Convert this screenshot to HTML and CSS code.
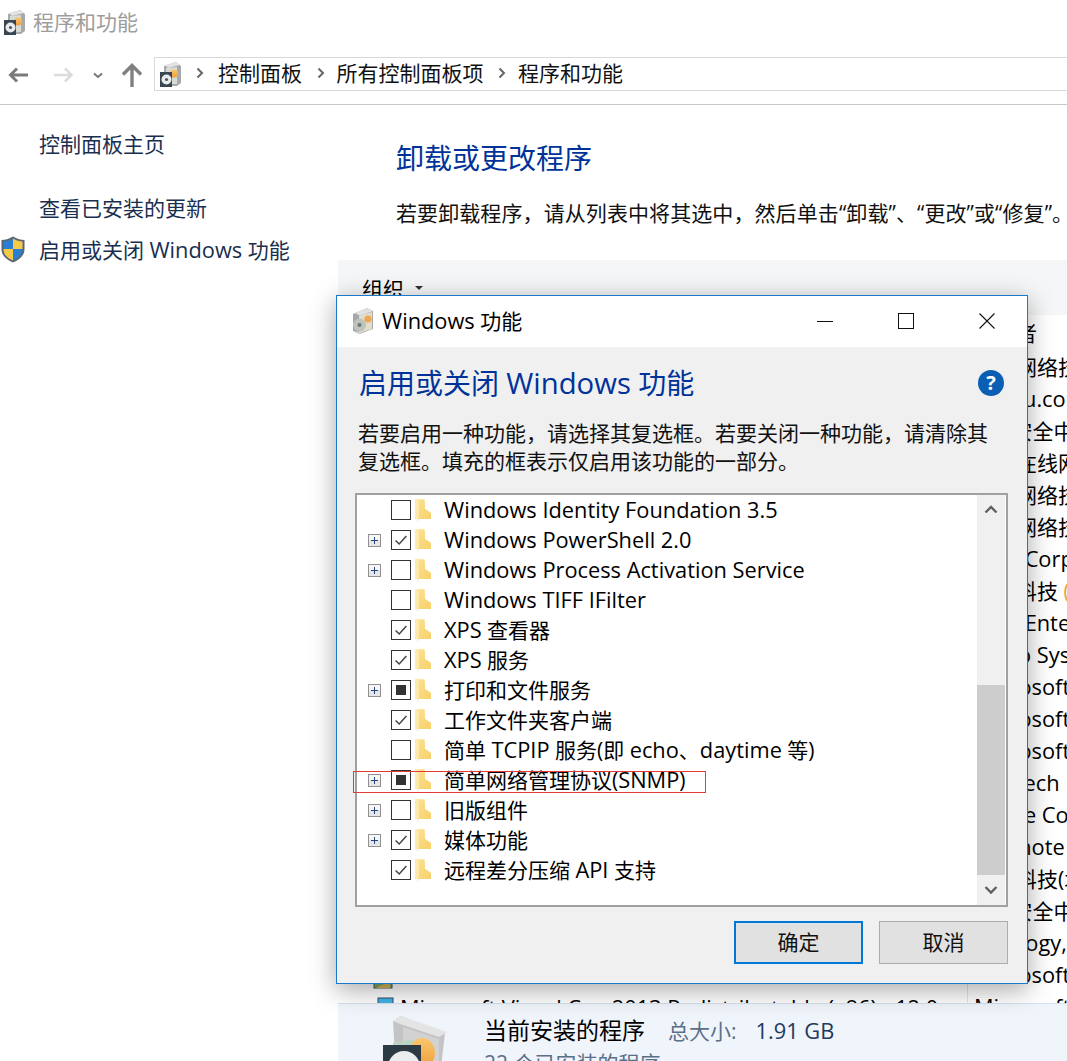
FILE: index.html
```html
<!DOCTYPE html>
<html lang="zh-CN">
<head>
<meta charset="utf-8">
<title>程序和功能</title>
<link rel="stylesheet" href="styles.css">
</head>
<body>
<svg class="defs" width="0" height="0" aria-hidden="true">
  <defs>
    <linearGradient id="fold" x1="0" y1="0" x2="1" y2="0"><stop offset="0" stop-color="#fdebb0"/><stop offset="1" stop-color="#fbe092"/></linearGradient>
    <linearGradient id="fold2" x1="0" y1="0" x2="1" y2="1"><stop offset="0" stop-color="#fbdf8e"/><stop offset="1" stop-color="#f7d169"/></linearGradient>
    <linearGradient id="orange" x1="0" y1="0" x2="0" y2="1"><stop offset="0" stop-color="#f9c66d"/><stop offset="1" stop-color="#ee9f3c"/></linearGradient>
    <symbol id="folder" viewBox="0 0 16 23">
      <path d="M0 0H9.5L10 10L16 14V20H4L2 23V20H0Z" fill="url(#fold)"/>
      <path d="M4 1H9.5L10 10L16 14V20H4Z" fill="url(#fold2)"/>
    </symbol>
    <symbol id="cpl" viewBox="0 0 21 25">
      <path d="M4 4L16 0L21 4V21L17 24H4Z" fill="#a9a9a9"/>
      <path d="M5 3L16 0L20 3L8 6Z" fill="#e2e2e2"/>
      <path d="M6 6L17 5V22H6Z" fill="#d6dbd4"/>
      <circle cx="14" cy="11.5" r="4" fill="url(#orange)"/>
      <path d="M0 10H12V25H0Z" fill="#39464f"/>
      <circle cx="6.5" cy="17.5" r="5" fill="#e8ecec"/>
      <circle cx="6.5" cy="17.5" r="1.6" fill="#556"/>
    </symbol>
    <symbol id="dlgbox" viewBox="0 0 26 28">
      <path d="M3 7L17 1L23 4V22L9 27L3 24Z" fill="#a4a8ac"/>
      <path d="M5 6L17 1L23 4L10 9Z" fill="#dfe1e3"/>
      <path d="M9 9L22 5V22L9 26Z" fill="#e3dcc8"/>
      <circle cx="18" cy="12" r="3.6" fill="#eea850"/>
      <circle cx="9.5" cy="18" r="6.5" fill="#bcc4bc"/>
      <circle cx="9.5" cy="18" r="2" fill="#6e7b70"/>
      <path d="M3 24L9 27L14 26L9 25Z" fill="#d6d6d6"/>
    </symbol>
    <symbol id="exp" viewBox="0 0 13 13">
      <rect x="0.5" y="0.5" width="12" height="12" fill="#e6e6e6" stroke="#919191"/>
      <rect x="1" y="1" width="11" height="5" fill="#f6f6f6"/>
      <path d="M6.5 3V10M3 6.5H10" stroke="#25437f" stroke-width="1" fill="none"/>
    </symbol>
    <symbol id="chk" viewBox="0 0 20 20">
      <path d="M4 10.5L8 14.5L16 5.5" stroke="#444" stroke-width="1.6" fill="none"/>
    </symbol>
  </defs>
</svg>

<div class="window">
  <header class="titlebar">
    <svg class="title-icon"><use href="#cpl"/></svg>
    <span class="title-text">程序和功能</span>
  </header>

  <nav class="navbar">
    <svg class="nav-back" viewBox="0 0 20 16"><path d="M9 1.5L2.5 8L9 14.5M3 8H20" fill="none" stroke="#7a7a7a" stroke-width="3"/></svg>
    <svg class="nav-fwd" viewBox="0 0 20 16"><path d="M11 1.5L17.5 8L11 14.5M17 8H0" fill="none" stroke="#dcdcdc" stroke-width="2.5"/></svg>
    <svg class="nav-drop" viewBox="0 0 10 7"><path d="M1 1.5L5 5L9 1.5" fill="none" stroke="#777" stroke-width="2"/></svg>
    <svg class="nav-up" viewBox="0 0 22 24"><path d="M2 11.5L11 2.5L20 11.5M11 3V24" fill="none" stroke="#808080" stroke-width="3.4"/></svg>
    <div class="crumbs">
      <svg class="crumb-icon"><use href="#cpl"/></svg>
      <svg class="crumb-sep first" viewBox="0 0 8 12"><path d="M1.5 1.5L6 6L1.5 10.5" fill="none" stroke="#666" stroke-width="2"/></svg>
      <span class="crumb">控制面板</span>
      <svg class="crumb-sep" viewBox="0 0 8 12"><path d="M1.5 1.5L6 6L1.5 10.5" fill="none" stroke="#666" stroke-width="2"/></svg>
      <span class="crumb">所有控制面板项</span>
      <svg class="crumb-sep" viewBox="0 0 8 12"><path d="M1.5 1.5L6 6L1.5 10.5" fill="none" stroke="#666" stroke-width="2"/></svg>
      <span class="crumb">程序和功能</span>
    </div>
  </nav>

  <div class="content">
    <aside class="sidebar">
      <a class="side-link home">控制面板主页</a>
      <a class="side-link updates">查看已安装的更新</a>
      <a class="side-link features">
        <svg class="shield" viewBox="0 0 24 27">
          <path d="M12 0.5C8 3 4 4 0.5 4V13C0.5 20 6 24 12 26.5C18 24 23.5 20 23.5 13V4C20 4 16 3 12 0.5Z" fill="#5a6672"/>
          <path d="M12 2.5C9 4.5 5.5 5.5 2.5 5.5V13H12Z" fill="#2b7fd3"/>
          <path d="M12 2.5C15 4.5 18.5 5.5 21.5 5.5V13H12Z" fill="#f7c948"/>
          <path d="M2.5 13H12V24.5C7 22.5 2.5 19 2.5 13Z" fill="#f7c948"/>
          <path d="M21.5 13H12V24.5C17 22.5 21.5 19 21.5 13Z" fill="#2b7fd3"/>
        </svg>
        启用或关闭 <span class="lat">Windows</span> 功能
      </a>
    </aside>

    <main class="main">
      <h1 class="main-title">卸载或更改程序</h1>
      <p class="main-desc">若要卸载程序，请从列表中将其选中，然后单击“卸载”、“更改”或“修复”。</p>
      <div class="toolbar"><span class="org">组织</span><span class="org-arrow"></span></div>
      <div class="col-head"><span class="col-name">名称</span><span class="col-pub">发布者</span></div>
      <div class="list">
        <div class="row"><span class="name"></span><span class="pub">北京网络技术</span></div>
        <div class="row"><span class="name"></span><span class="pub lat nudge">Baidu.com</span></div>
        <div class="row"><span class="name"></span><span class="pub"><span class="lat">360</span>安全中心</span></div>
        <div class="row"><span class="name"></span><span class="pub">上海在线网络</span></div>
        <div class="row"><span class="name"></span><span class="pub">北京网络技术</span></div>
        <div class="row"><span class="name"></span><span class="pub">上海网络技术</span></div>
        <div class="row"><span class="name"></span><span class="pub lat">Intel Corporation</span></div>
        <div class="row"><span class="name"></span><span class="pub">北京科技 <span class="mark">(</span></span></div>
        <div class="row"><span class="name"></span><span class="pub lat">Intel Enterprise</span></div>
        <div class="row"><span class="name"></span><span class="pub lat nudge">Cisco Systems</span></div>
        <div class="row"><span class="name"></span><span class="pub lat">Microsoft</span></div>
        <div class="row"><span class="name"></span><span class="pub lat">Microsoft</span></div>
        <div class="row"><span class="name"></span><span class="pub lat">Microsoft</span></div>
        <div class="row"><span class="name"></span><span class="pub lat">Logitech</span></div>
        <div class="row"><span class="name"></span><span class="pub lat nudge">Apple Computer</span></div>
        <div class="row"><span class="name"></span><span class="pub lat">Evernote</span></div>
        <div class="row"><span class="name"></span><span class="pub">深圳科技(北京)</span></div>
        <div class="row"><span class="name"></span><span class="pub"><span class="lat">360</span>安全中心</span></div>
        <div class="row"><span class="name"></span><span class="pub lat nudge">Neology,</span></div>
        <div class="row"><span class="name"><svg class="row-icon tall" viewBox="0 0 20 24"><rect x="1" y="1" width="18" height="22" fill="#7fa86a" stroke="#4a5a50"/><path d="M3 23L17 16V23Z" fill="#d8b45a"/></svg></span><span class="pub lat">Microsoft</span></div>
        <div class="row"><span class="name"><svg class="row-icon" viewBox="0 0 20 20"><rect x="3" y="1" width="15" height="15" fill="#3fb4e6" stroke="#3a4a66"/><path d="M0 10H8V16H0Z" fill="#9aa0a6"/></svg><span class="name-text lat">Microsoft Visual C++ 2013 Redistributable (x86) - 12.0</span></span><span class="pub lat">Microsoft</span></div>
      </div>
      <footer class="summary">
        <svg class="summary-icon" viewBox="0 0 64 76">
          <path d="M10 6L18 1L62 18L56 70L14 76Z" fill="#c4c4c4"/>
          <path d="M10 6L18 1L64 17L56 22L20 10Z" fill="#e4e4e4"/>
          <path d="M20 12L56 24V60H20Z" fill="#d2d2d2"/>
          <path d="M10 28L30 24L36 44H10Z" fill="#bcd4c4"/>
          <ellipse cx="39" cy="38" rx="13" ry="15" fill="url(#orange)"/>
          <path d="M0 30H38V76H0Z" fill="#2c3a44"/>
          <circle cx="21" cy="52" r="16" fill="#e9eeee"/>
        </svg>
        <div class="summary-text">
          <div class="summary-line">
            <span class="summary-title">当前安装的程序</span>
            <span class="summary-label">总大小:</span>
            <span class="summary-value lat">1.91 GB</span>
          </div>
          <div class="summary-count">22 个已安装的程序</div>
        </div>
      </footer>
    </main>
  </div>
</div>

<section class="dialog">
  <div class="dlg-title">
    <svg class="dlg-icon"><use href="#dlgbox"/></svg>
    <span class="dlg-title-text"><span class="lat">Windows</span> 功能</span>
    <div class="dlg-controls">
      <svg class="ctl" viewBox="0 0 16 16"><path d="M0 8.5H16" stroke="#111" stroke-width="1"/></svg>
      <svg class="ctl" viewBox="0 0 16 16"><rect x="0.5" y="0.5" width="15" height="15" fill="none" stroke="#111"/></svg>
      <svg class="ctl" viewBox="0 0 16 16"><path d="M0.5 0.5L15.5 15.5M15.5 0.5L0.5 15.5" stroke="#111" stroke-width="1.1"/></svg>
    </div>
  </div>
  <div class="dlg-body">
    <div class="dlg-head">
      <h2 class="dlg-heading">启用或关闭 <span class="lat-h">Windows</span> 功能</h2>
      <span class="help">?</span>
    </div>
    <p class="dlg-desc">若要启用一种功能，请选择其复选框。若要关闭一种功能，请清除其复选框。填充的框表示仅启用该功能的一部分。</p>
    <div class="tree-box">
      <div class="tree">
        <div class="t-row"><span class="exp-slot"></span><span class="cb"></span><svg class="fold"><use href="#folder"/></svg><span class="t-text lat">Windows Identity Foundation 3.5</span></div>
        <div class="t-row"><span class="exp-slot"><svg class="exp"><use href="#exp"/></svg></span><span class="cb"><svg class="tick"><use href="#chk"/></svg></span><svg class="fold"><use href="#folder"/></svg><span class="t-text lat">Windows PowerShell 2.0</span></div>
        <div class="t-row"><span class="exp-slot"><svg class="exp"><use href="#exp"/></svg></span><span class="cb"></span><svg class="fold"><use href="#folder"/></svg><span class="t-text lat">Windows Process Activation Service</span></div>
        <div class="t-row"><span class="exp-slot"></span><span class="cb"></span><svg class="fold"><use href="#folder"/></svg><span class="t-text lat">Windows TIFF IFilter</span></div>
        <div class="t-row"><span class="exp-slot"></span><span class="cb"><svg class="tick"><use href="#chk"/></svg></span><svg class="fold"><use href="#folder"/></svg><span class="t-text"><span class="lat">XPS</span> 查看器</span></div>
        <div class="t-row"><span class="exp-slot"></span><span class="cb"><svg class="tick"><use href="#chk"/></svg></span><svg class="fold"><use href="#folder"/></svg><span class="t-text"><span class="lat">XPS</span> 服务</span></div>
        <div class="t-row"><span class="exp-slot"><svg class="exp"><use href="#exp"/></svg></span><span class="cb"><i class="partial"></i></span><svg class="fold"><use href="#folder"/></svg><span class="t-text">打印和文件服务</span></div>
        <div class="t-row"><span class="exp-slot"></span><span class="cb"><svg class="tick"><use href="#chk"/></svg></span><svg class="fold"><use href="#folder"/></svg><span class="t-text">工作文件夹客户端</span></div>
        <div class="t-row"><span class="exp-slot"></span><span class="cb"></span><svg class="fold"><use href="#folder"/></svg><span class="t-text">简单 <span class="lat">TCPIP</span> 服务(即 <span class="lat">echo</span>、<span class="lat">daytime</span> 等)</span></div>
        <div class="t-row"><span class="exp-slot"><svg class="exp"><use href="#exp"/></svg></span><span class="cb"><i class="partial"></i></span><svg class="fold"><use href="#folder"/></svg><span class="t-text">简单网络管理协议(<span class="lat">SNMP</span>)</span><span class="red-mark"></span></div>
        <div class="t-row"><span class="exp-slot"><svg class="exp"><use href="#exp"/></svg></span><span class="cb"></span><svg class="fold"><use href="#folder"/></svg><span class="t-text">旧版组件</span></div>
        <div class="t-row"><span class="exp-slot"><svg class="exp"><use href="#exp"/></svg></span><span class="cb"><svg class="tick"><use href="#chk"/></svg></span><svg class="fold"><use href="#folder"/></svg><span class="t-text">媒体功能</span></div>
        <div class="t-row"><span class="exp-slot"></span><span class="cb"><svg class="tick"><use href="#chk"/></svg></span><svg class="fold"><use href="#folder"/></svg><span class="t-text">远程差分压缩 <span class="lat">API</span> 支持</span></div>
      </div>
      <div class="scroll">
        <svg class="sc-btn" viewBox="0 0 28 30"><path d="M8.5 17.5L14 12L19.5 17.5" fill="none" stroke="#606060" stroke-width="2.4"/></svg>
        <div class="sc-track"><div class="sc-thumb"></div></div>
        <svg class="sc-btn" viewBox="0 0 28 30"><path d="M8.5 12L14 17.5L19.5 12" fill="none" stroke="#606060" stroke-width="2.4"/></svg>
      </div>
    </div>
    <div class="dlg-actions">
      <button class="btn primary">确定</button>
      <button class="btn">取消</button>
    </div>
  </div>
</section>
</body>
</html>
```
FILE: styles.css
```css
html, body { margin: 0; padding: 0; height: 100%; }
body {
  width: 1067px; height: 1061px; overflow: hidden; position: relative; background: #fff;
  font-family: "Open Sans", "Noto Sans CJK SC", sans-serif;
  font-size: 21px; color: #000;
}
.defs { position: absolute; }
svg { display: block; flex: none; }
h1, h2, p { margin: 0; font-weight: 400; }
.lat { font-size: 21.8px; }
.lat-h { font-size: 29.3px; }

.window { display: flex; flex-direction: column; height: 1061px; }
.titlebar { height: 44px; display: flex; align-items: center; padding-left: 4px; gap: 8px; flex: none; }
.title-icon { width: 21px; height: 25px; }
.title-text { color: #9d9d9d; line-height: 28px; }

.navbar { height: 60px; flex: none; border-bottom: 1px solid #c8c8c8; display: flex; align-items: center; position: relative; padding-left: 8px; }
.nav-back { width: 20px; height: 16px; margin-top: 2px; }
.nav-fwd { width: 20px; height: 16px; margin: 2px 0 0 26px; }
.nav-drop { width: 10px; height: 7px; margin: 2px 0 0 19px; }
.nav-up { width: 22px; height: 24px; margin: 2px 0 0 18px; }
.crumbs { margin-left: 11px; flex: 1; height: 34px; box-sizing: border-box; border: 1px solid #d9d9d9; border-right: 0; display: flex; align-items: center; padding: 0 0 2px 5px; }
.crumb-icon { width: 21px; height: 25px; margin: 2px 15px 0 0; }
.crumb-sep { width: 8px; height: 12px; margin: 0 12px 0 14.5px; }
.crumb-sep.first { margin-left: 0; margin-right: 14px; }
.crumb { line-height: 28px; color: #111; }

.content { flex: 1; display: flex; min-height: 0; }
.sidebar { width: 338px; flex: none; display: flex; flex-direction: column; padding-left: 39px; box-sizing: border-box; }
.side-link { color: #1a2f4f; line-height: 28px; position: relative; display: block; }
.home { margin-top: 25px; }
.updates { margin-top: 36px; }
.features { margin-top: 14px; }
.shield { position: absolute; left: -38px; top: 0; width: 24px; height: 27px; }

.main { flex: 1; min-width: 0; display: flex; flex-direction: column; }
.main-title { font-size: 28px; line-height: 38px; color: #003399; margin: 34px 0 0 58px; white-space: nowrap; }
.main-desc { line-height: 28px; margin: 22px 0 0 58px; white-space: nowrap; color: #111; letter-spacing: .09px; }
.toolbar { height: 55px; flex: none; margin-top: 33px; background: #f5f6f7; display: flex; align-items: center; padding: 0 0 0 24px; box-sizing: border-box; }
.org { line-height: 28px; position: relative; top: 1px; }
.org-arrow { width: 0; height: 0; border: 4px solid transparent; border-top: 4px solid #333; border-bottom: 0; margin-left: 11px; }
.col-head { height: 36px; flex: none; display: flex; align-items: center; }
.col-name { width: 630px; flex: none; padding-left: 62px; box-sizing: border-box; border-right: 1px solid #e5e5e5; line-height: 28px; }
.col-pub { padding-left: 6px; white-space: nowrap; font-size: 21px; line-height: 28px; }
.list { flex: 1; min-height: 0; overflow: hidden; }
.row { height: 32px; display: flex; align-items: center; white-space: nowrap; }
.name { width: 630px; height: 32px; flex: none; box-sizing: border-box; padding-left: 37px; border-right: 1px solid #e5e5e5; display: flex; align-items: center; gap: 5px; }
.row-icon { width: 20px; height: 20px; }
.row-icon.tall { height: 24px; margin-top: 4px; margin-left: -2px; }
.pub { padding-left: 6px; line-height: 28px; }
.pub.nudge { padding-left: 10px; }
.mark { color: #e8a33c; }
.summary { height: 58px; flex: none; background: #f0f4fb; border-top: 1px solid #d6e0ee; box-sizing: border-box; display: flex; overflow: hidden; padding-left: 45px; }
.summary-icon { width: 64px; height: 76px; margin-top: 11px; }
.summary-text { margin-left: 37px; padding-top: 11px; }
.summary-line { display: flex; align-items: baseline; line-height: 30px; }
.summary-title { font-size: 23px; }
.summary-label { color: #5a6f88; margin-left: 23px; }
.summary-value { color: #1f3a5f; margin-left: 19px; }
.summary-count { color: #5a6f88; line-height: 28px; margin-top: 3px; }

/* floating window over the control panel */
.dialog {
  position: absolute; left: 336px; top: 295px; width: 692px; height: 689px;
  box-sizing: border-box; border: 1px solid #1979ca; background: #f0f0f0;
  box-shadow: 0 6px 24px rgba(0,0,0,.35);
  display: flex; flex-direction: column;
}
.dlg-title { height: 51px; flex: none; background: #fff; display: flex; align-items: center; padding-left: 13px; }
.dlg-icon { width: 26px; height: 28px; position: relative; top: -1px; }
.dlg-title-text { margin-left: 6px; line-height: 28px; position: relative; top: -1px; }
.dlg-controls { margin-left: auto; display: flex; position: relative; top: -1px; }
.ctl { width: 16px; height: 16px; padding: 0 32px; }
.dlg-controls .ctl:nth-child(1) { padding: 0 33px 0 0; }
.dlg-controls .ctl:nth-child(2) { padding: 0 33px 0 32px; }
.dlg-controls .ctl:nth-child(3) { padding: 0 32px 0 32px; }

.dlg-body { flex: 1; min-height: 0; display: flex; flex-direction: column; padding: 0 19px 0 18px; }
.dlg-head { display: flex; align-items: center; height: 38px; margin-top: 17px; margin-left: 4px; }
.dlg-heading { font-size: 28px; line-height: 38px; color: #003399; flex: 1; white-space: nowrap; }
.help { width: 26px; height: 26px; margin-right: 4px; border-radius: 50%; background: #0a5eb3; color: #fff; font-weight: 700; font-size: 20px; line-height: 26px; text-align: center; }
.dlg-desc { margin: 17px 0 0 3px; line-height: 28px; width: 640px; color: #111; }
.tree-box { margin-top: 18px; height: 414px; box-sizing: border-box; border: 2px solid #a0a0a0; background: #fff; display: flex; }
.tree { flex: 1; min-width: 0; position: relative; }
.t-row { height: 30px; display: flex; align-items: center; position: relative; }
.exp-slot { width: 23px; flex: none; height: 13px; padding-left: 11px; }
.exp { width: 13px; height: 13px; }
.cb { width: 20px; height: 20px; box-sizing: border-box; border: 1px solid #333; background: #fff; display: flex; align-items: center; justify-content: center; flex: none; }
.tick { width: 18px; height: 18px; }
.partial { display: block; width: 10px; height: 10px; background: #333; }
.fold { width: 16px; height: 23px; margin-left: 4px; }
.t-text { margin-left: 13px; white-space: nowrap; line-height: 28px; }
.red-mark { position: absolute; left: -4px; top: 6px; width: 353px; height: 22px; box-sizing: border-box; border: 1px solid #e53a3a; }
.scroll { width: 28px; flex: none; background: #f0f0f0; display: flex; flex-direction: column; margin-right: 1px; }
.sc-btn { width: 28px; height: 30px; }
.sc-track { flex: 1; position: relative; display: flex; flex-direction: column; justify-content: flex-end; }
.sc-thumb { height: 190px; background: #cdcdcd; }
.dlg-actions { display: flex; justify-content: flex-end; gap: 16px; margin-top: 14px; }
.btn { width: 129px; height: 43px; box-sizing: border-box; border: 1px solid #adadad; background: #e1e1e1; font: inherit; color: #111; padding: 0 0 3px; }
.btn.primary { border: 2px solid #0078d7; }
```
